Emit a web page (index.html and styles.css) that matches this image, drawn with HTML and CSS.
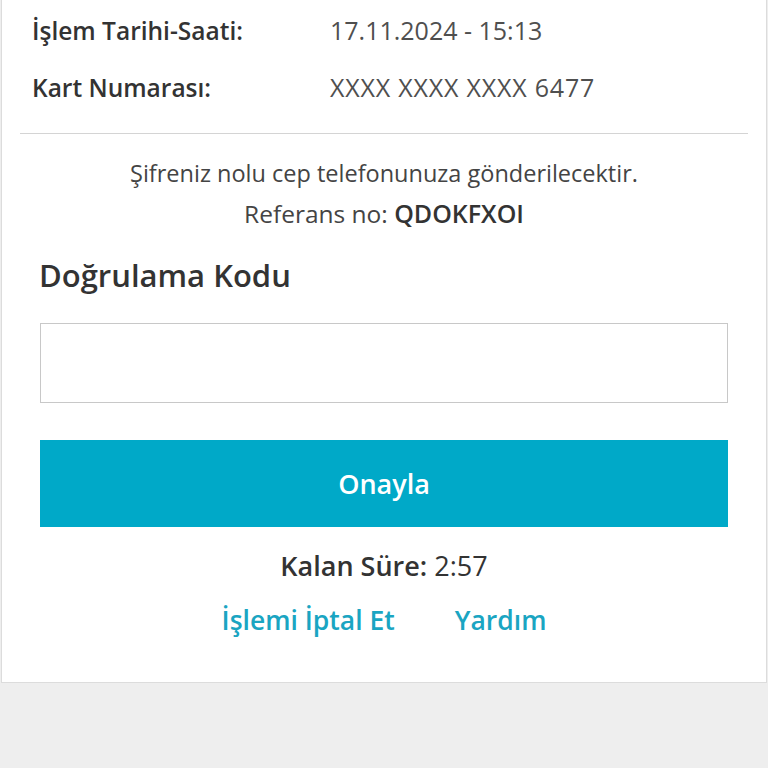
FILE: index.html
```html
<!DOCTYPE html>
<html lang="tr">
<head>
<meta charset="utf-8">
<title>Doğrulama</title>
<link rel="stylesheet" href="styles.css">
</head>
<body>
<main class="card">
  <section class="details">
    <div class="row"><span class="label">İşlem Tarihi-Saati:</span><span class="value">17.11.2024 - 15:13</span></div>
    <div class="row"><span class="label">Kart Numarası:</span><span class="value value-card">XXXX XXXX XXXX 6477</span></div>
  </section>
  <hr class="divider">
  <p class="info">Şifreniz nolu cep telefonunuza gönderilecektir.</p>
  <p class="info info-ref">Referans no: <strong class="ref">QDOKFXOI</strong></p>
  <form class="form">
    <h2 class="title">Doğrulama Kodu</h2>
    <input class="code" type="text" aria-label="Doğrulama Kodu">
    <button class="submit" type="button">Onayla</button>
    <p class="timer"><strong class="timer-label">Kalan Süre:</strong> 2:57</p>
    <div class="links">
      <a class="link" href="#">İşlemi İptal Et</a>
      <a class="link" href="#">Yardım</a>
    </div>
  </form>
</main>
</body>
</html>
```
FILE: styles.css
```css
html, body {
  margin: 0;
  padding: 0;
  background: #eeeeee;
  font-family: "Open Sans", Lato, "Liberation Sans", sans-serif;
}
.card {
  box-sizing: border-box;
  width: 766px;
  margin-left: 1px;
  background: #fff;
  border: 1px solid #dcdcdc;
  border-top: none;
  padding: 2px 18px 42px;
}
.details {
  padding-left: 12px;
}
.row {
  display: grid;
  grid-template-columns: 298px 1fr;
  line-height: 57px;
}
.label {
  font-size: 24.5px;
  font-weight: 600;
  color: #333;
}
.value {
  font-size: 25px;
  color: #4f4f4f;
}
.value-card {
  letter-spacing: 0.8px;
}
.divider {
  border: none;
  border-top: 1px solid #d4d4d4;
  margin: 17px 0 19px;
}
.info {
  margin: 0;
  text-align: center;
  font-size: 23.5px;
  line-height: 40px;
  color: #444;
}
.info-ref {
  font-size: 24.5px;
}
.ref {
  font-size: 25px;
  font-weight: 600;
  color: #333;
}
.form {
  padding: 0 20px;
  margin-top: 21px;
  display: flex;
  flex-direction: column;
}
.title {
  margin: 0 0 0 -1px;
  font-size: 31px;
  line-height: 40px;
  font-weight: 600;
  color: #333;
}
.code {
  box-sizing: border-box;
  margin-top: 28px;
  height: 80px;
  width: 100%;
  border: 1px solid #c8c8c8;
  background: #fff;
  font-size: 22px;
}
.submit {
  margin-top: 37px;
  height: 87px;
  width: 100%;
  border: none;
  background: #00a9c8;
  color: #fff;
  font-family: inherit;
  font-size: 27px;
  font-weight: 600;
}
.timer {
  margin: 19px 0 0;
  text-align: center;
  font-size: 27px;
  line-height: 40px;
  color: #333;
}
.timer-label {
  font-weight: 600;
}
.links {
  margin-top: 14px;
  display: flex;
  justify-content: center;
  gap: 60px;
  line-height: 40px;
}
.link {
  font-size: 26.5px;
  font-weight: 600;
  color: #1aa5c2;
  text-decoration: none;
}
```
